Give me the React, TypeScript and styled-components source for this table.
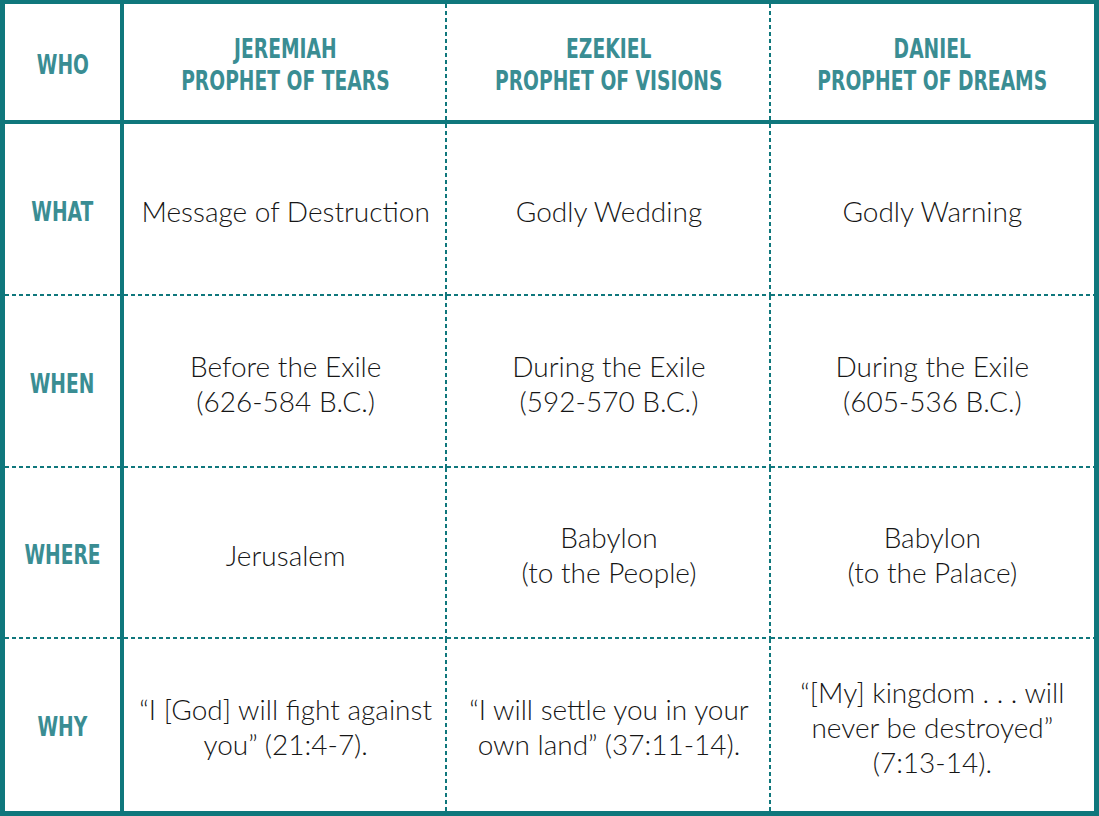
import styled, { createGlobalStyle } from 'styled-components'

const GlobalStyle = createGlobalStyle`
  html, body {
    margin: 0;
    padding: 0;
    background: #ffffff;
  }
`

const teal = '#0f777c'
const tealText = '#3a8d93'
const dash = `repeating-linear-gradient(to bottom, ${teal} 0 4px, transparent 4px 7px)`
const dashH = `repeating-linear-gradient(to right, ${teal} 0 4px, transparent 4px 7px)`

const Chart = styled.div`
  box-sizing: border-box;
  width: 1099px;
  height: 816px;
  border: 5px solid ${teal};
  border-top-width: 4px;
  display: grid;
  grid-template-columns: 119px repeat(3, 1fr);
  grid-template-rows: 120px repeat(4, 1fr);
  background: #ffffff;
`

const Cell = styled.div<{ $head?: boolean; $dashRight?: boolean; $dashBottom?: boolean }>`
  box-sizing: border-box;
  display: flex;
  align-items: center;
  justify-content: center;
  text-align: center;
  padding: ${(p) => (p.$head ? '6px 0 0' : '4px 10px 0')};
  border-bottom: ${(p) => (p.$head ? `4px solid ${teal}` : 'none')};
  background-image: ${(p) =>
    [p.$dashRight ? dash : null, p.$dashBottom ? dashH : null].filter(Boolean).join(', ') || 'none'};
  background-size: ${(p) =>
    [p.$dashRight ? '2px 100%' : null, p.$dashBottom ? '100% 2px' : null].filter(Boolean).join(', ') || 'auto'};
  background-position: ${(p) =>
    [p.$dashRight ? 'right top' : null, p.$dashBottom ? 'left bottom' : null].filter(Boolean).join(', ') || '0 0'};
  background-repeat: no-repeat;
`

const LabelCell = styled(Cell)`
  border-right: 4px solid ${teal};
  padding-left: 0;
  padding-right: 0;
`

// condensed bold caps, squeezed to the narrow face of the print
const Label = styled.span`
  display: inline-block;
  white-space: nowrap;
  transform: scaleX(0.77);
  font-family: "DejaVu Sans Condensed", "DejaVu Sans", sans-serif;
  font-weight: 700;
  font-size: 27px;
  line-height: 32px;
  color: ${tealText};
`

const Body = styled.span`
  font-family: Lato, "Open Sans", sans-serif;
  font-weight: 300;
  font-size: 28px;
  line-height: 35px;
  color: #161616;
`

const prophets = [
  ['JEREMIAH', 'PROPHET OF TEARS'],
  ['EZEKIEL', 'PROPHET OF VISIONS'],
  ['DANIEL', 'PROPHET OF DREAMS'],
]

const rows: { label: string; cells: string[][] }[] = [
  {
    label: 'WHAT',
    cells: [['Message of Destruction'], ['Godly Wedding'], ['Godly Warning']],
  },
  {
    label: 'WHEN',
    cells: [
      ['Before the Exile', '(626-584 B.C.)'],
      ['During the Exile', '(592-570 B.C.)'],
      ['During the Exile', '(605-536 B.C.)'],
    ],
  },
  {
    label: 'WHERE',
    cells: [['Jerusalem'], ['Babylon', '(to the People)'], ['Babylon', '(to the Palace)']],
  },
  {
    label: 'WHY',
    cells: [
      ['“I [God] will fight against', 'you” (21:4-7).'],
      ['“I will settle you in your', 'own land” (37:11-14).'],
      ['“[My] kingdom . . . will', 'never be destroyed”', '(7:13-14).'],
    ],
  },
]

function Lines({ lines }: { lines: string[] }) {
  return (
    <>
      {lines.map((line, i) => (
        <span key={i}>
          {line}
          {i < lines.length - 1 && <br />}
        </span>
      ))}
    </>
  )
}

export default function App() {
  return (
    <>
      <GlobalStyle />
      <Chart>
        <LabelCell $head>
          <Label>WHO</Label>
        </LabelCell>
        {prophets.map((p, i) => (
          <Cell key={p[0]} $head $dashRight={i < 2}>
            <Label>
              <Lines lines={p} />
            </Label>
          </Cell>
        ))}
        {rows.map((row, r) => {
          const last = r === rows.length - 1
          return [
            <LabelCell key={row.label} $dashBottom={!last}>
              <Label>{row.label}</Label>
            </LabelCell>,
            ...row.cells.map((lines, c) => (
              <Cell key={row.label + c} $dashRight={c < 2} $dashBottom={!last}>
                <Body>
                  <Lines lines={lines} />
                </Body>
              </Cell>
            )),
          ]
        })}
      </Chart>
    </>
  )
}
